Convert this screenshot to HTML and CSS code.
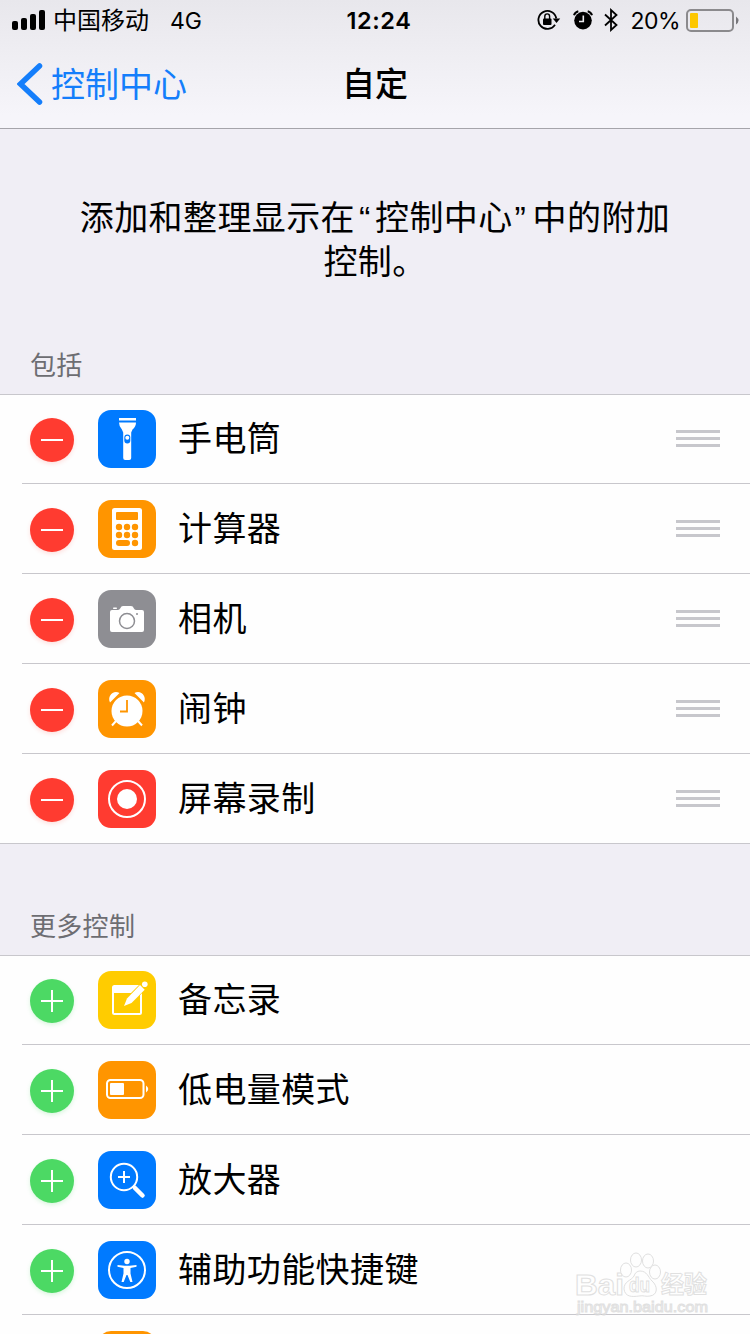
FILE: index.html
```html
<!DOCTYPE html>
<html lang="zh-CN">
<head>
    <meta charset="UTF-8">
    <meta name="viewport" content="width=device-width, initial-scale=1.0">
    <title>自定</title>
    <link rel="stylesheet" href="styles.css">
</head>
<body>
    <header class="header">
        <div class="status-bar">
            <div class="status-left">
                <svg class="signal" width="34" height="20" viewBox="0 0 34 20">
                    <rect x="0" y="11" width="6" height="9" rx="2"/>
                    <rect x="9" y="8" width="6" height="12" rx="2"/>
                    <rect x="18" y="4" width="6" height="16" rx="2"/>
                    <rect x="27" y="0" width="6" height="20" rx="2"/>
                </svg>
                <span class="carrier">中国移动</span>
                <span class="network">4G</span>
            </div>
            <div class="time">12:24</div>
            <div class="status-right">
                <svg class="lock" width="24" height="22" viewBox="0 0 24 22">
                    <path d="M18 15.800A9 9 0 1 1 19.300 9.500" fill="none" stroke="#000" stroke-width="1.800"/>
                    <path d="M15.800 9.500h7.400l-3.700 4.500z"/>
                    <rect x="6" y="9.500" width="8.500" height="6.500" rx="1"/>
                    <path d="M7.800 10V7.500a2.400 2.600 0 0 1 4.800 0V10" fill="none" stroke="#000" stroke-width="1.400"/>
                </svg>
                <svg class="alarm" width="20" height="20" viewBox="0 0 20 20">
                    <circle cx="10" cy="10.600" r="8.800"/>
                    <path d="M1 5.200Q2 2 5.300 1.200M19 5.200Q18 2 14.700 1.200" fill="none" stroke="#000" stroke-width="2"/>
                    <path d="M10.300 5.500v6H6" fill="none" stroke="#eeedf1" stroke-width="1.600"/>
                </svg>
                <svg class="bluetooth" width="14" height="24" viewBox="0 0 14 24">
                    <path d="M1 6.500L12.500 17 7 22V2l5.500 5L1 17.500" fill="none" stroke="#000" stroke-width="1.800"/>
                </svg>
                <span class="percent">20%</span>
                <svg class="battery" width="53" height="24" viewBox="0 0 53 24">
                    <rect x="1" y="1" width="46" height="21" rx="4" fill="none" stroke="#8b8a8d" stroke-width="2"/>
                    <rect x="4" y="4" width="8" height="15" rx="1" fill="#fdc700"/>
                    <path d="M50 7.500q5 4 0 8z" fill="#77767a"/>
                </svg>
            </div>
        </div>
        <nav class="nav-bar">
            <a class="back">
                <svg width="26" height="42" viewBox="0 0 26 42">
                    <path d="M22.500 3L3.500 21l19 18" fill="none" stroke="#147efb" stroke-width="5.500" stroke-linecap="round" stroke-linejoin="miter"/>
                </svg>
                <span class="back-text">控制中心</span>
            </a>
            <h1 class="title">自定</h1>
        </nav>
    </header>

    <p class="description">添加和整理显示在<span class="quote open">“</span>控制中心<span class="quote">”</span>中的附加<br>控制。</p>

    <h2 class="section-title">包括</h2>
    <ul class="list">
        <li class="row">
            <span class="toggle remove"></span>
            <svg class="icon blue" viewBox="0 0 58 58">
                <path d="M21 8h17v2.500H21zM21 12.500h17q0 4-3.500 7l-1.300 3V48q0 2-2 2h-4q-2 0-2-2V22.500l-1.300-3Q21 16.500 21 12.500z" fill="#fff"/>
                <rect x="26.300" y="24.500" width="6" height="9" rx="3" fill="#007aff"/>
                <circle cx="29.300" cy="27.700" r="2" fill="#fff"/>
            </svg>
            <span class="label">手电筒</span>
            <span class="grip"></span>
        </li>
        <li class="row">
            <span class="toggle remove"></span>
            <svg class="icon orange" viewBox="0 0 58 58">
                <rect x="14" y="8" width="30" height="42" rx="2.500" fill="#fff"/>
                <g fill="#ff9500">
                    <rect x="18" y="12" width="22" height="8" rx="1"/>
                    <circle cx="21" cy="27" r="3.200"/>
                    <circle cx="29" cy="27" r="3.200"/>
                    <circle cx="37" cy="27" r="3.200"/>
                    <circle cx="21" cy="35" r="3.200"/>
                    <circle cx="29" cy="35" r="3.200"/>
                    <circle cx="37" cy="35" r="3.200"/>
                    <rect x="18" y="40" width="14" height="6" rx="3"/>
                    <circle cx="37" cy="43" r="3.200"/>
                </g>
            </svg>
            <span class="label">计算器</span>
            <span class="grip"></span>
        </li>
        <li class="row">
            <span class="toggle remove"></span>
            <svg class="icon gray" viewBox="0 0 58 58">
                <path d="M14 20h6q1.500 0 2.300-1.800Q23.200 16 25 16h8q2 0 2.800 2.200Q36.500 20 38 20h6q2 0 2 2v18q0 2-2 2H14q-2 0-2-2V22q0-2 2-2z" fill="#fff"/>
                <rect x="15" y="17.500" width="4" height="1.500" rx=".7" fill="#fff"/>
                <circle cx="29" cy="31" r="7.500" fill="none" stroke="#8e8e93" stroke-width="1.500"/>
                <circle cx="39" cy="24" r="1" fill="#8e8e93"/>
            </svg>
            <span class="label">相机</span>
            <span class="grip"></span>
        </li>
        <li class="row">
            <span class="toggle remove"></span>
            <svg class="icon orange" viewBox="0 0 58 58">
                <path d="M12 22.500C9 16.500 15 9.500 21.500 13zM46 22.500C49 16.500 43 9.500 36.500 13z" fill="#fff"/>
                <path d="M18 41l-4 4.500M40 41l4 4.500" stroke="#fff" stroke-width="2"/>
                <circle cx="29" cy="31" r="15.500" fill="#fff"/>
                <path d="M29 20v11.500h-7" fill="none" stroke="#ff9500" stroke-width="1.800"/>
            </svg>
            <span class="label">闹钟</span>
            <span class="grip"></span>
        </li>
        <li class="row">
            <span class="toggle remove"></span>
            <svg class="icon red" viewBox="0 0 58 58">
                <circle cx="29" cy="29" r="18" fill="none" stroke="#fff" stroke-width="2"/>
                <circle cx="29" cy="29" r="10" fill="#fff"/>
            </svg>
            <span class="label">屏幕录制</span>
            <span class="grip"></span>
        </li>
    </ul>

    <h2 class="section-title more">更多控制</h2>
    <ul class="list more-list">
        <li class="row">
            <span class="toggle add"></span>
            <svg class="icon yellow" viewBox="0 0 58 58">
                <rect x="15" y="15" width="28" height="28" rx="1.500" fill="none" stroke="#fff" stroke-width="2"/>
                <path d="M15 15h28v7H15z" fill="#fff"/>
                <path d="M24.500 36l4.500-10L43.500 11.500l5.500 5.500L34.500 32z" fill="#fc0"/>
                <path d="M26 35l3-7.500L42 14l4.700 4.700L33.500 32z" fill="#fff"/>
                <circle cx="46.800" cy="13.200" r="2.800" fill="#fff"/>
            </svg>
            <span class="label">备忘录</span>
        </li>
        <li class="row">
            <span class="toggle add"></span>
            <svg class="icon orange" viewBox="0 0 58 58">
                <rect x="9" y="19" width="36.500" height="18" rx="3.500" fill="none" stroke="#fff" stroke-width="2"/>
                <rect x="12" y="22" width="14" height="12" rx="1" fill="#fff"/>
                <path d="M48 24.500q4.500 3.500 0 7z" fill="#fff"/>
            </svg>
            <span class="label">低电量模式</span>
        </li>
        <li class="row">
            <span class="toggle add"></span>
            <svg class="icon blue" viewBox="0 0 58 58">
                <circle cx="26" cy="26" r="13.200" fill="none" stroke="#fff" stroke-width="2"/>
                <path d="M26 20v12M20 26h12" stroke="#fff" stroke-width="2"/>
                <path d="M35 35l2 2" stroke="#fff" stroke-width="2"/>
                <path d="M37 37l7.500 7.500" stroke="#fff" stroke-width="4.500" stroke-linecap="round"/>
            </svg>
            <span class="label">放大器</span>
        </li>
        <li class="row">
            <span class="toggle add"></span>
            <svg class="icon blue" viewBox="0 0 58 58">
                <circle cx="29" cy="29" r="18" fill="none" stroke="#fff" stroke-width="2"/>
                <circle cx="29" cy="20.500" r="2.700" fill="#fff"/>
                <path d="M19.500 24l7 .7h5l7-.7v1.800l-6 1.200v5.500l2 8.500h-2.200L29.500 34h-1l-2.800 7h-2.200l2-8.500V27l-6-1.200z" fill="#fff"/>
            </svg>
            <span class="label">辅助功能快捷键</span>
        </li>
        <li class="row">
            <span class="toggle add"></span>
            <svg class="icon orange" viewBox="0 0 58 58"></svg>
        </li>
    </ul>

    <svg class="watermark" width="150" height="80" viewBox="0 0 150 80">
        <g fill="#fff" stroke="#d9d9d9" stroke-width="1">
            <text class="brand" x="2" y="47" textLength="49" lengthAdjust="spacingAndGlyphs">Bai</text>
            <ellipse cx="53" cy="22" rx="5.500" ry="7"/>
            <ellipse cx="63" cy="12" rx="5.500" ry="7"/>
            <ellipse cx="75" cy="13" rx="5.500" ry="7"/>
            <ellipse cx="82" cy="24" rx="5.500" ry="7"/>
            <path d="M67 23c7 0 8 6 12 10 6 5 6 14-2 15-4 1-7-1-11 0-7 1-14 1-15-7 0-8 7-8 10-13 1-3 3-5 6-5z"/>
            <text class="du" x="56" y="44" textLength="21" lengthAdjust="spacingAndGlyphs">du</text>
            <text class="cn" x="88" y="45" textLength="46" lengthAdjust="spacingAndGlyphs">经验</text>
            <text class="site" x="4" y="64" textLength="131" lengthAdjust="spacingAndGlyphs">jingyan.baidu.com</text>
        </g>
    </svg>
</body>
</html>
```
FILE: styles.css
```css
* {
    box-sizing: border-box;
}
body {
    width: 750px;
    height: 1334px;
    margin: 0;
    overflow: hidden;
    position: relative;
    background-color: #f0eef5;
    color: #000;
    font-family: Inter, "Noto Sans CJK SC", sans-serif;
}
.header {
    height: 129px;
    background: linear-gradient(#e8e7ec, #f6f5fa 90%);
    border-bottom: 1px solid #a5a4aa;
}
.status-bar {
    display: grid;
    grid-template-columns: 1fr auto 1fr;
    align-items: center;
    height: 40px;
    padding: 0 11px 0 12px;
    font-size: 24px;
}
.status-left, .status-right {
    display: flex;
    align-items: center;
}
.status-right {
    justify-content: flex-end;
}
.carrier {
    margin: -3px 0 0 7px;
}
.network {
    margin-left: 21px;
    padding-top: 2px;
    font-size: 23px;
}
.time {
    padding: 1px 0 0 7px;
    font-size: 23.5px;
    font-weight: 600;
    letter-spacing: 0.6px;
}
.alarm {
    margin-left: 12px;
}
.bluetooth {
    margin-left: 11px;
}
.percent {
    margin: 2px 6px 0 12px;
    font-size: 23px;
    letter-spacing: -0.5px;
}
.battery {
    margin-top: 2px;
}
.nav-bar {
    display: grid;
    grid-template-columns: 1fr auto 1fr;
    align-items: center;
    height: 88px;
    padding: 0 17px;
}
.back {
    display: flex;
    align-items: center;
    gap: 8px;
    color: #147efb;
    font-size: 34px;
}
.back-text {
    margin-top: -4px;
}
.title {
    margin: -4px 0 0;
    font-size: 33px;
    font-weight: 500;
}
.description {
    height: 200px;
    margin: 0;
    padding-top: 67px;
    font-size: 34px;
    line-height: 44px;
    letter-spacing: 0.4px;
    text-align: center;
}
.quote {
    display: inline-block;
    width: 20px;
    padding-left: 2px;
    font-family: "Liberation Sans", sans-serif;
    text-align: left;
}
.quote.open {
    padding-left: 4px;
}
.section-title {
    height: 65px;
    margin: 0;
    padding: 17px 30px 0;
    color: #6d6d72;
    font-size: 26px;
    font-weight: 400;
    line-height: 40px;
    letter-spacing: 0.3px;
}
.section-title.more {
    height: 111px;
    padding-top: 63px;
}
.list {
    margin: 0;
    padding: 0 0 0 22px;
    list-style: none;
    background-color: #fefefe;
    box-shadow: inset 0 1px #c8c7cc, inset 0 -1px #c8c7cc;
}
.more-list {
    height: 379px;
    overflow: hidden;
    box-shadow: inset 0 1px #c8c7cc;
}
.row {
    display: flex;
    align-items: center;
    height: 90px;
    padding: 1px 30px 0 8px;
    border-bottom: 1px solid #c8c7cc;
}
.row:last-child {
    border-bottom-color: transparent;
}
.toggle {
    width: 44px;
    height: 44px;
    margin-top: 2px;
    border-radius: 50%;
    background-repeat: no-repeat;
    background-position: center;
}
.remove {
    background-color: #ff3b30;
    background-image: linear-gradient(#fff, #fff);
    background-size: 22px 2px;
    box-shadow: 0 2px 4px rgba(255, 59, 48, 0.15);
}
.add {
    background-color: #4cd964;
    background-image: linear-gradient(#fff, #fff), linear-gradient(#fff, #fff);
    background-size: 22px 2px, 2px 22px;
    box-shadow: 0 2px 4px rgba(76, 217, 100, 0.2);
}
.icon {
    width: 58px;
    height: 58px;
    margin-left: 24px;
    border-radius: 13px;
}
.blue {
    background-color: #007aff;
}
.orange {
    background-color: #ff9500;
}
.gray {
    background-color: #8e8e93;
}
.red {
    background-color: #ff3b30;
}
.yellow {
    background-color: #fc0;
}
.label {
    flex: 1;
    margin-left: 22px;
    font-size: 34px;
    line-height: 50px;
    letter-spacing: 0.4px;
}
.grip {
    width: 44px;
    height: 17px;
    margin-top: -2px;
    border-top: 3px solid #c7c7cc;
    border-bottom: 3px solid #c7c7cc;
    background: linear-gradient(#c7c7cc, #c7c7cc) center / 44px 3px no-repeat;
}
/* logo sits over the bottom right corner of the list */
.watermark {
    position: absolute;
    left: 573px;
    top: 1248px;
    opacity: 0.8;
}
.watermark text {
    font-family: "Liberation Sans", "Noto Sans CJK SC", sans-serif;
    font-weight: 700;
}
.watermark .brand {
    font-size: 29px;
}
.watermark .du {
    font-size: 20px;
}
.watermark .cn {
    font-size: 24px;
}
.watermark .site {
    font-size: 15px;
    font-weight: 400;
}
```
